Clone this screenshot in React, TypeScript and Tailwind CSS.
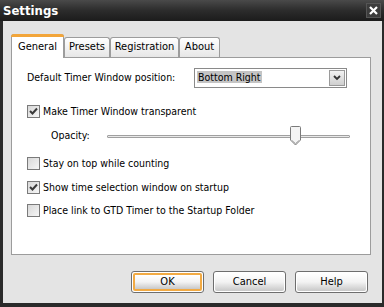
import React from "react";

const font = { fontFamily: '"DejaVu Sans Condensed", "DejaVu Sans", sans-serif' };

function Check({ checked }: { checked?: boolean }) {
  return (
    <div className="w-[13px] h-[13px] border border-[#7a7a7a] bg-gradient-to-br from-[#d8d8d8] to-[#f6f6f6] flex items-center justify-center shrink-0">
      {checked && (
        <svg width="9" height="9" viewBox="0 0 9 9">
          <path d="M1 4 L3.5 6.5 L8 1.5" stroke="#3a3a3a" strokeWidth="2" fill="none" />
        </svg>
      )}
    </div>
  );
}

function Btn({ label, def }: { label: string; def?: boolean }) {
  return (
    <div className="w-[73px] h-[22px] rounded-[3px] border border-[#6e6e6e] p-px bg-white">
      <div
        className={`w-full h-full rounded-[2px] flex items-center justify-center text-[11px] text-black bg-gradient-to-b from-[#ffffff] via-[#f3f3f3] to-[#c8c8c8] ${def ? "border-2 border-[#f2aa43]" : ""}`}
      >
        {label}
      </div>
    </div>
  );
}

export default function App() {
  return (
    <div className="w-[384px] h-[307px] flex flex-col overflow-hidden" style={font}>
      {/* title bar */}
      <div className="h-[21px] bg-gradient-to-b from-[#4a4a4a] via-[#2c2c2c] to-[#1c1c1c] flex items-center justify-between pl-[3px] pr-[3px]">
        <span className="text-white font-bold text-[13px]">Settings</span>
        <div className="w-[15px] h-[15px] bg-[#3c3c3c] border border-[#555] flex items-center justify-center">
          <svg width="9" height="9" viewBox="0 0 9 9">
            <path d="M1 1 L8 8 M8 1 L1 8" stroke="#fff" strokeWidth="2.2" />
          </svg>
        </div>
      </div>
      {/* body */}
      <div className="flex-1 bg-[#e4e4e4] border-l-[3px] border-r-[2px] border-b-[4px] border-[#2a2a2a] flex flex-col pl-[8px] pt-[13px]">
        {/* tabs */}
        <div className="flex items-end h-[23px] text-[11px] text-black">
          <div className="h-[24px] w-[53px] -mb-px relative z-10 bg-white border border-b-0 border-[#9c9c9c] rounded-t-[3px] flex items-center justify-center">
            <div className="absolute -top-px -left-px -right-px h-[3px] rounded-t-[3px] bg-[#f2a53a]" />
            <span className="mt-[1px]">General</span>
          </div>
          <div className="h-[20px] w-[46px] bg-gradient-to-b from-white to-[#e6e6e6] border border-b-0 border-[#9c9c9c] rounded-t-[3px] flex items-center justify-center">
            Presets
          </div>
          <div className="h-[20px] w-[69px] bg-gradient-to-b from-white to-[#e6e6e6] border border-b-0 border-[#9c9c9c] rounded-t-[3px] flex items-center justify-center">
            Registration
          </div>
          <div className="h-[20px] w-[41px] bg-gradient-to-b from-white to-[#e6e6e6] border border-b-0 border-[#9c9c9c] rounded-t-[3px] flex items-center justify-center">
            About
          </div>
        </div>
        {/* panel */}
        <div className="w-[360px] h-[198px] bg-white border border-[#9c9c9c] text-[10.5px] text-black flex flex-col pl-[15px] pt-[10px]">
          <div className="flex items-center h-[20px]">
            <span className="w-[167px]">Default Timer Window position:</span>
            <div className="w-[153px] h-[20px] border border-[#8a8a8a] flex items-center p-px">
              <div className="flex-1 pl-[1px]">
                <span className="bg-[#c4c4c4] px-[1px]">Bottom Right</span>
              </div>
              <div className="w-[16px] h-[16px] border border-[#9a9a9a] bg-gradient-to-b from-[#f2f2f2] to-[#cfcfcf] flex items-center justify-center">
                <svg width="8" height="6" viewBox="0 0 8 6">
                  <path d="M1 1 L4 4 L7 1" stroke="#333" strokeWidth="1.8" fill="none" />
                </svg>
              </div>
            </div>
          </div>
          <div className="flex items-center gap-[3px] mt-[17px] h-[13px]">
            <Check checked />
            <span>Make Timer Window transparent</span>
          </div>
          <div className="flex items-center h-[20px] mt-[8px] pl-[24px]">
            <span className="w-[56px]">Opacity:</span>
            <div className="relative w-[243px] h-[20px] flex items-center">
              <div className="w-full h-[3px] border border-[#a0a0a0] bg-[#e8e8e8] rounded-[1px]" />
              <svg className="absolute left-[183px] top-0" width="11" height="20" viewBox="0 0 11 20">
                <path d="M0.5 1.5 Q0.5 0.5 1.5 0.5 L9.5 0.5 Q10.5 0.5 10.5 1.5 L10.5 14 L5.5 19 L0.5 14 Z" fill="#f4f4f4" stroke="#7a7a7a" />
                <path d="M2 14.5 L5.5 17.5 L9 14.5" stroke="#a8a8a8" fill="none" />
              </svg>
            </div>
          </div>
          <div className="flex items-center gap-[3px] mt-[11px] h-[13px]">
            <Check />
            <span>Stay on top while counting</span>
          </div>
          <div className="flex items-center gap-[3px] mt-[11px] h-[13px]">
            <Check checked />
            <span>Show time selection window on startup</span>
          </div>
          <div className="flex items-center gap-[3px] mt-[10px] h-[13px]">
            <Check />
            <span>Place link to GTD Timer to the Startup Folder</span>
          </div>
        </div>
        {/* buttons */}
        <div className="flex gap-[9px] pl-[120px] mt-[16px]">
          <Btn label="OK" def />
          <Btn label="Cancel" />
          <Btn label="Help" />
        </div>
      </div>
    </div>
  );
}
